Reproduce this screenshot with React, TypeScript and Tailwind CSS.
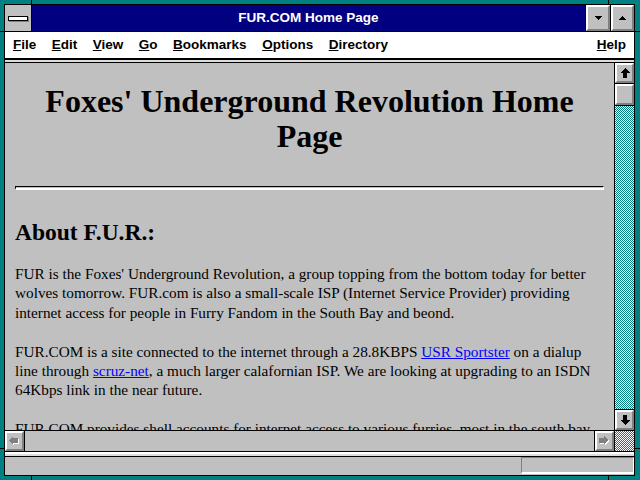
import React from "react";

function Bevel({ className = "", children }: { className?: string; children?: React.ReactNode }) {
  return (
    <div
      className={
        "flex items-center justify-center bg-[#c0c0c0] border-t-2 border-l-2 border-b-2 border-r-2 border-t-white border-l-white border-b-[#808080] border-r-[#808080] " +
        className
      }
    >
      {children}
    </div>
  );
}

function ArrowUp() {
  return (
    <svg width="10" height="10" viewBox="0 0 10 10" shapeRendering="crispEdges">
      <path d="M5 0 L10 5 L7 5 L7 10 L3 10 L3 5 L0 5 Z" fill="#000" />
    </svg>
  );
}
function ArrowDown() {
  return (
    <svg width="10" height="10" viewBox="0 0 10 10" shapeRendering="crispEdges">
      <path d="M5 10 L10 5 L7 5 L7 0 L3 0 L3 5 L0 5 Z" fill="#000" />
    </svg>
  );
}
function ArrowLeftGray() {
  return (
    <svg width="11" height="10" viewBox="0 0 11 10" shapeRendering="crispEdges">
      <path d="M0 4 L4 0 L4 2 L9 2 L9 7 L4 7 L4 9 Z" fill="#fff" transform="translate(1,1)" />
      <path d="M0 4 L4 0 L4 2 L9 2 L9 7 L4 7 L4 9 Z" fill="#808080" />
    </svg>
  );
}
function ArrowRightGray() {
  return (
    <svg width="11" height="10" viewBox="0 0 11 10" shapeRendering="crispEdges">
      <path d="M9 4 L5 0 L5 2 L0 2 L0 7 L5 7 L5 9 Z" fill="#fff" transform="translate(1,1)" />
      <path d="M9 4 L5 0 L5 2 L0 2 L0 7 L5 7 L5 9 Z" fill="#808080" />
    </svg>
  );
}

const checker =
  "bg-[image:repeating-conic-gradient(#008080_0%_25%,#ffffff_0%_50%)] bg-[length:2px_2px]";

export default function App() {
  return (
    <div className="relative w-[640px] h-[480px] bg-[#008080] pl-[4px] pt-[4px] pr-[5px] pb-[4px] overflow-hidden">
      {/* resize corner ticks */}
      <div className="absolute left-[31px] top-0 w-px h-[4px] bg-black" />
      <div className="absolute left-[608px] top-0 w-px h-[4px] bg-black" />
      <div className="absolute left-[31px] bottom-0 w-px h-[4px] bg-black" />
      <div className="absolute left-[608px] bottom-0 w-px h-[4px] bg-black" />
      <div className="absolute left-0 top-[31px] w-[4px] h-px bg-black" />
      <div className="absolute left-0 top-[448px] w-[4px] h-px bg-black" />
      <div className="absolute right-0 top-[31px] w-[5px] h-px bg-black" />
      <div className="absolute right-0 top-[448px] w-[5px] h-px bg-black" />

      <div className="w-full h-full border border-black flex flex-col bg-[#c0c0c0]">
        {/* Title bar */}
        <div className="flex h-[27px] border-b border-black shrink-0">
          <div className="w-[27px] border-r border-black bg-[#c0c0c0] flex items-center justify-center">
            <div className="w-[20px] h-[5px] bg-white border border-black shadow-[1px_1px_0_#808080]" />
          </div>
          <div className="flex-1 bg-[#000080] flex items-center justify-center text-white font-bold text-[13.5px] font-['Liberation_Sans',Arial,sans-serif]">
            FUR.COM Home Page
          </div>
          <div className="w-[25px] border-l border-black">
            <Bevel className="w-full h-full">
              <svg width="7" height="4" viewBox="0 0 7 4" shapeRendering="crispEdges">
                <path d="M0 0 L7 0 L3.5 4 Z" fill="#000" />
              </svg>
            </Bevel>
          </div>
          <div className="w-[24px] border-l border-black">
            <Bevel className="w-full h-full">
              <svg width="7" height="4" viewBox="0 0 7 4" shapeRendering="crispEdges">
                <path d="M0 4 L7 4 L3.5 0 Z" fill="#000" />
              </svg>
            </Bevel>
          </div>
        </div>

        {/* Menu bar */}
        <div className="h-[28px] shrink-0 bg-white border-b-2 border-black flex items-center pl-[8px] pr-[8px] font-bold text-[13.5px] text-black font-['Liberation_Sans',Arial,sans-serif]">
          <div className="flex gap-[15.5px]">
            <span><u>F</u>ile</span>
            <span><u>E</u>dit</span>
            <span><u>V</u>iew</span>
            <span><u>G</u>o</span>
            <span><u>B</u>ookmarks</span>
            <span><u>O</u>ptions</span>
            <span><u>D</u>irectory</span>
          </div>
          <span className="ml-auto"><u>H</u>elp</span>
        </div>

        {/* toolbar remnant */}
        <div className="h-[3px] shrink-0 bg-[#dcdcdc] border-b border-black" />

        {/* Main area */}
        <div className="flex h-[367px] shrink-0">
          <div className="flex-1 overflow-hidden px-[10px] pt-[21px] text-black font-['Liberation_Serif','Times_New_Roman',serif]">
            <h1 className="text-[32px] leading-[35px] font-bold text-center">
              Foxes' Underground Revolution Home
              <br />
              Page
            </h1>
            <div className="mt-[32px] h-[4px] border-t border-l border-r border-b-2 border-t-black border-l-black border-r-white border-b-white" />
            <h2 className="mt-[28px] text-[23.5px] leading-[28px] font-bold">About F.U.R.:</h2>
            <div className="text-[15.25px] leading-[19.4px] whitespace-nowrap">
              <p className="mt-[18px]">
                FUR is the Foxes' Underground Revolution, a group topping from the bottom today for better
                <br />
                wolves tomorrow. FUR.com is also a small-scale ISP (Internet Service Provider) providing
                <br />
                internet access for people in Furry Fandom in the South Bay and beond.
              </p>
              <p className="mt-[19.4px]">
                FUR.COM is a site connected to the internet through a 28.8KBPS{" "}
                <a className="text-[#0000ff] underline">USR Sportster</a> on a dialup
                <br />
                line through <a className="text-[#0000ff] underline">scruz-net</a>, a much larger calafornian ISP. We are looking at upgrading to an ISDN
                <br />
                64Kbps link in the near future.
              </p>
              <p className="mt-[19.4px]">
                FUR.COM provides shell accounts for internet access to various furries, most in the south bay
              </p>
            </div>
          </div>

          {/* Vertical scrollbar */}
          <div className="w-[20px] border-l border-black flex flex-col">
            <div className="h-[21px] border-b border-black">
              <Bevel className="w-full h-full">
                <ArrowUp />
              </Bevel>
            </div>
            <div className="h-[22px] border-b border-black">
              <Bevel className="w-full h-full" />
            </div>
            <div className={"flex-1 " + checker} />
            <div className="h-[21px] border-t border-black">
              <Bevel className="w-full h-full">
                <ArrowDown />
              </Bevel>
            </div>
          </div>
        </div>

        {/* Horizontal scrollbar */}
        <div className="flex h-[21px] shrink-0 border-t border-black">
          <div className="w-[20px] border-r border-black">
            <Bevel className="w-full h-full">
              <ArrowLeftGray />
            </Bevel>
          </div>
          <div className="flex-1 bg-[#c0c0c0]" />
          <div className="w-[20px] border-l border-black">
            <Bevel className="w-full h-full">
              <ArrowRightGray />
            </Bevel>
          </div>
          <div className={"w-[20px] border-l border-black " + checker} />
        </div>

        {/* separator */}
        <div className="h-[6px] shrink-0 border-t border-b border-black flex flex-col">
          <div className="h-[2px] bg-white" />
          <div className="h-[2px] bg-[#dcdcdc]" />
        </div>

        {/* Status bar */}
        <div className="flex-1 flex justify-end items-start">
          <div className="w-[113px] h-[17px] border-t border-l border-b-2 border-r border-t-[#808080] border-l-[#808080] border-b-white border-r-white" />
        </div>
      </div>
    </div>
  );
}
